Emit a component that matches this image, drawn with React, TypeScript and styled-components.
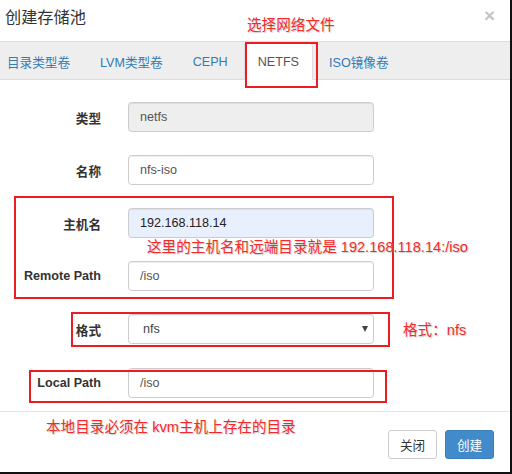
import styled, { createGlobalStyle } from "styled-components";

const GlobalStyle = createGlobalStyle`
  html, body {
    margin: 0;
    padding: 0;
    background: #fff;
  }
  * {
    box-sizing: border-box;
  }
`;

const FONT = `"Liberation Sans", "Noto Sans CJK SC", sans-serif`;

// 모달 전체
const Modal = styled.div`
  position: relative;
  width: 512px;
  height: 474px;
  overflow: hidden;
  background: #fff;
  border-right: 2px solid #111;
  border-bottom: 2px solid #111;
  font-family: ${FONT};
  color: #333;
  display: flex;
  flex-direction: column;
`;

const Header = styled.div`
  height: 41px;
  padding: 6px 15px 0 5px;
  display: flex;
  justify-content: space-between;
  align-items: flex-start;
`;

const Title = styled.h4`
  margin: 0;
  font-size: 16.2px;
  line-height: 23px;
  font-weight: normal;
  color: #333;
`;

const Close = styled.span`
  font-size: 19px;
  font-weight: bold;
  line-height: 1;
  color: #c4c4c4;
`;

const TabBar = styled.div`
  height: 39px;
  border-top: 1px solid #ddd;
  border-bottom: 1px solid #ddd;
  background: #eee;
  display: flex;
  margin-left: -7px;
`;

const Tab = styled.div<{ $active?: boolean }>`
  display: flex;
  align-items: center;
  padding: 0 13px;
  margin: 1px 2px -1px 0;
  font-size: 12.6px;
  border: 1px solid ${(p) => (p.$active ? "#ddd" : "transparent")};
  border-bottom-color: transparent;
  border-radius: 3px 3px 0 0;
  background: ${(p) => (p.$active ? "#fff" : "transparent")};
  color: ${(p) => (p.$active ? "#555" : "#337ab7")};
  white-space: nowrap;
`;

const Form = styled.div`
  padding: 22px 0 13px;
  display: flex;
  flex-direction: column;
  gap: 23px;
`;

const Row = styled.div<{ $extra?: number }>`
  display: grid;
  grid-template-columns: 101px 246px;
  column-gap: 27px;
  align-items: center;
  margin-top: ${(p) => p.$extra ?? 0}px;
`;

const Label = styled.label`
  text-align: right;
  font-size: 12.6px;
  font-weight: bold;
  color: #333;
  white-space: nowrap;
`;

const Field = styled.div<{ $disabled?: boolean; $autofill?: boolean }>`
  height: 30px;
  border: 1px solid #ccc;
  border-radius: 3.6px;
  padding: 0 11px;
  display: flex;
  align-items: center;
  font-size: 12.6px;
  color: ${(p) => (p.$autofill ? "#222" : "#555")};
  background: ${(p) =>
    p.$disabled ? "#eee" : p.$autofill ? "#e8f0fe" : "#fff"};
  box-shadow: inset 0 1px 1px rgba(0, 0, 0, 0.075);
`;

const SelectBox = styled(Field)`
  padding: 0 5px 0 14px;
  justify-content: space-between;
  color: #444;
`;

const Caret = styled.span`
  width: 0;
  height: 0;
  border-left: 3.5px solid transparent;
  border-right: 3.5px solid transparent;
  border-top: 6px solid #444;
`;

const Footer = styled.div`
  border-top: 1px solid #e5e5e5;
  padding: 18px 16px 0 0;
  display: flex;
  justify-content: flex-end;
  gap: 8px;
`;

const Button = styled.button<{ $primary?: boolean }>`
  width: 49px;
  height: 29px;
  padding: 0;
  font-family: ${FONT};
  font-size: 12.6px;
  border-radius: 3px;
  border: 1px solid ${(p) => (p.$primary ? "#3b80bd" : "#ccc")};
  background: ${(p) => (p.$primary ? "#428bca" : "#fff")};
  color: ${(p) => (p.$primary ? "#fff" : "#333")};
`;

// 주석(빨간 표시) 오버레이
const Note = styled.div<{ $x: number; $y: number }>`
  position: absolute;
  left: ${(p) => p.$x}px;
  top: ${(p) => p.$y}px;
  font-size: 14.6px;
  line-height: 1;
  color: #f42a2a;
  white-space: nowrap;
  text-shadow: 1px 1px 1px rgba(140, 140, 140, 0.45);
`;

const Mark = styled.div<{ $x: number; $y: number; $w: number; $h: number }>`
  position: absolute;
  left: ${(p) => p.$x}px;
  top: ${(p) => p.$y}px;
  width: ${(p) => p.$w}px;
  height: ${(p) => p.$h}px;
  border: 2px solid #ed1c24;
  pointer-events: none;
`;

const tabs = ["目录类型卷", "LVM类型卷", "CEPH", "NETFS", "ISO镜像卷"];

export default function App() {
  return (
    <>
      <GlobalStyle />
      <Modal>
        <Header>
          <Title>创建存储池</Title>
          <Close>×</Close>
        </Header>
        <TabBar>
          {tabs.map((t) => (
            <Tab key={t} $active={t === "NETFS"}>
              {t}
            </Tab>
          ))}
        </TabBar>
        <Form>
          <Row>
            <Label>类型</Label>
            <Field $disabled>netfs</Field>
          </Row>
          <Row>
            <Label>名称</Label>
            <Field>nfs-iso</Field>
          </Row>
          <Row>
            <Label>主机名</Label>
            <Field $autofill>192.168.118.14</Field>
          </Row>
          <Row>
            <Label>Remote Path</Label>
            <Field>/iso</Field>
          </Row>
          <Row>
            <Label>格式</Label>
            <SelectBox>
              nfs
              <Caret />
            </SelectBox>
          </Row>
          <Row $extra={1}>
            <Label>Local Path</Label>
            <Field>/iso</Field>
          </Row>
        </Form>
        <Footer>
          <Button>关闭</Button>
          <Button $primary>创建</Button>
        </Footer>

        <Note $x={247} $y={18}>选择网络文件</Note>
        <Mark $x={245} $y={42} $w={73} $h={46} />
        <Mark $x={14} $y={196} $w={380} $h={103} />
        <Note $x={147} $y={240}>这里的主机名和远端目录就是 192.168.118.14:/iso</Note>
        <Mark $x={71} $y={312} $w={319} $h={35} />
        <Note $x={403} $y={323}>格式：nfs</Note>
        <Mark $x={29} $y={370} $w={358} $h={33} />
        <Note $x={46} $y={420}>本地目录必须在 kvm主机上存在的目录</Note>
      </Modal>
    </>
  );
}
